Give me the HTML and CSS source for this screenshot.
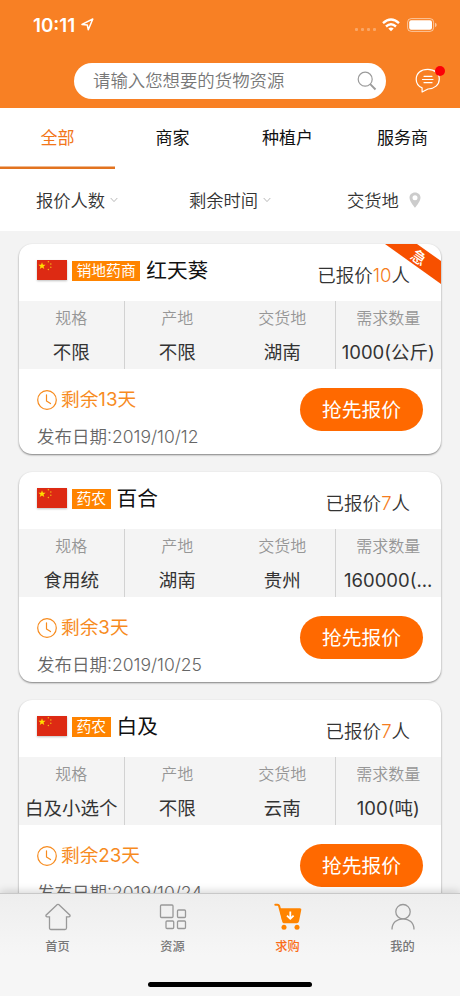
FILE: index.html
```
<!DOCTYPE html>
<html lang="zh-CN">
<head>
<meta charset="utf-8">
<meta name="viewport" content="width=device-width, initial-scale=1">
<title>求购</title>
<link rel="stylesheet" href="styles.css">
</head>
<body>
<svg class="defs" width="0" height="0" aria-hidden="true">
  <symbol id="flag" viewBox="0 0 30 20">
    <path fill="#dd2a13" d="M0 0h30v20H0z"/>
    <path fill="#ffde00" d="M5 2.300l.9 2.500h2.700L6.500 6.500l.8 2.600L5 7.600 2.700 9.100l.8-2.600L1.400 4.800h2.700z"/>
    <g fill="#f4b513"><circle cx="11.400" cy="1.800" r=".75"/><circle cx="13.800" cy="3.900" r=".75"/><circle cx="13.800" cy="7.200" r=".75"/><circle cx="11.400" cy="9.400" r=".75"/></g>
  </symbol>
  <symbol id="clock" viewBox="0 0 20 20">
    <g fill="none" stroke="#f78b1e" stroke-width="1.200" stroke-linecap="round" stroke-linejoin="round"><circle cx="10" cy="10" r="9.300"/><path d="M9.500 4.800v6.200l4 2.600"/></g>
  </symbol>
  <symbol id="chevron" viewBox="0 0 8 6">
    <path d="M.7 1L4 4.600 7.300 1" fill="none" stroke="#b8b8b8" stroke-width="1"/>
  </symbol>
</svg>
<div class="app">
  <header class="header">
    <div class="status">
      <span class="time">10:11</span>
      <svg class="locate" viewBox="0 0 13 13"><path d="M1 6.400L11.800 1 7.300 11.800 6.300 7z" fill="none" stroke="#fff" stroke-width="1.500" stroke-linejoin="round"/></svg>
      <span class="signal"><i></i><i></i><i></i><i></i></span>
      <svg class="wifi" viewBox="0 0 18 14"><g fill="none" stroke="#fff" stroke-width="2.400"><path d="M1 5.200Q9-2.200 17 5.200"/><path d="M4 8.500Q9 3.900 14 8.500"/></g><path d="M9 13.300L6.300 10.500Q9 8.500 11.700 10.500z" fill="#fff"/></svg>
      <svg class="battery" viewBox="0 0 30 14"><rect x=".6" y=".6" width="26" height="12.800" rx="3.600" fill="none" stroke="#fff" stroke-opacity=".55"/><rect x="2.200" y="2.200" width="22.800" height="9.600" rx="2" fill="#fff"/><path d="M28 4.800q1.700.6 1.700 2.200T28 9.200z" fill="#fff" fill-opacity=".55"/></svg>
    </div>
    <div class="searchbar">
      <div class="search">
        <span>请输入您想要的货物资源</span>
        <svg class="lens" viewBox="0 0 20 20"><g fill="none" stroke="#9b9b9b"><circle cx="8.200" cy="8.200" r="7" stroke-width="1.200"/><path d="M13.200 13.200l5.300 5.300" stroke-width="1.900"/></g></svg>
      </div>
      <div class="message">
        <svg viewBox="0 0 26 25"><g fill="none" stroke="#fff" stroke-width="1.200" stroke-linecap="round" stroke-linejoin="round"><path d="M7.100 24V19.900Q1.200 17.400 1.200 11.300C1.200 5 6 1.300 12.800 1.300S24.300 5.300 24.300 11.100 19.500 20.700 13 21z"/><path d="M9 8.300h8M7.500 11.500h10.500M9 14.700h8"/></g></svg>
        <b class="dot"></b>
      </div>
    </div>
  </header>
  <nav class="tabs">
    <a class="tab active">全部</a><a class="tab">商家</a><a class="tab">种植户</a><a class="tab">服务商</a>
  </nav>
  <div class="filters">
    <span class="filter">报价人数<svg class="chev"><use href="#chevron"/></svg></span>
    <span class="filter">剩余时间<svg class="chev"><use href="#chevron"/></svg></span>
    <span class="filter place">交货地<svg class="pin" viewBox="0 0 12 16"><path fill="#ccc" fill-rule="evenodd" d="M6 .4C2.700.4.500 2.800.500 5.800.500 9.600 6 15.800 6 15.800S11.500 9.600 11.500 5.800C11.500 2.800 9.300.4 6 .4zM6 3.300a2.500 2.500 0 1 1 0 5 2.500 2.500 0 0 1 0-5z"/></svg></span>
  </div>
  <main class="list">
    <article class="card">
      <div class="top"><svg class="flag"><use href="#flag"/></svg><span class="tag">销地药商</span><h2>红天葵</h2><span class="quotes">已报价<em>10</em>人</span></div>
      <div class="urgent"><span>急</span></div>
      <dl class="specs">
        <div><dt>规格</dt><dd>不限</dd></div><div><dt>产地</dt><dd>不限</dd></div><div><dt>交货地</dt><dd>湖南</dd></div><div><dt>需求数量</dt><dd>1000(公斤)</dd></div>
      </dl>
      <div class="bottom"><div><p class="left"><svg class="clock"><use href="#clock"/></svg>剩余13天</p><p class="date">发布日期:2019/10/12</p></div><button>抢先报价</button></div>
    </article>
    <article class="card">
      <div class="top"><svg class="flag"><use href="#flag"/></svg><span class="tag">药农</span><h2>百合</h2><span class="quotes">已报价<em>7</em>人</span></div>
      <dl class="specs">
        <div><dt>规格</dt><dd>食用统</dd></div><div><dt>产地</dt><dd>湖南</dd></div><div><dt>交货地</dt><dd>贵州</dd></div><div><dt>需求数量</dt><dd>160000(...</dd></div>
      </dl>
      <div class="bottom"><div><p class="left"><svg class="clock"><use href="#clock"/></svg>剩余3天</p><p class="date">发布日期:2019/10/25</p></div><button>抢先报价</button></div>
    </article>
    <article class="card">
      <div class="top"><svg class="flag"><use href="#flag"/></svg><span class="tag">药农</span><h2>白及</h2><span class="quotes">已报价<em>7</em>人</span></div>
      <dl class="specs">
        <div><dt>规格</dt><dd>白及小选个</dd></div><div><dt>产地</dt><dd>不限</dd></div><div><dt>交货地</dt><dd>云南</dd></div><div><dt>需求数量</dt><dd>100(吨)</dd></div>
      </dl>
      <div class="bottom"><div><p class="left"><svg class="clock"><use href="#clock"/></svg>剩余23天</p><p class="date">发布日期:2019/10/24</p></div><button>抢先报价</button></div>
    </article>
  </main>
  <footer class="tabbar">
    <div class="items">
      <a class="item"><svg viewBox="0 0 28 28"><path d="M13.300 1.600q.7-.6 1.400 0L26 12.200q.4 1.600-1.200 1.600h-2.300v11.200q0 1.500-1.500 1.500H7q-1.500 0-1.500-1.500V13.800H3.200q-1.600 0-1.200-1.600z"/></svg>首页</a>
      <a class="item"><svg viewBox="0 0 28 28"><rect x="1.500" y="2" width="12.500" height="12.500" rx="1"/><rect x="18.500" y="7" width="8" height="7.500" rx="1"/><rect x="7" y="18" width="7.700" height="7.500" rx="1"/><rect x="18.500" y="18" width="8" height="7.500" rx="1"/></svg>资源</a>
      <a class="item active"><svg viewBox="0 0 28 28"><path class="rail" d="M1.300 1.700h2.200q1.200 0 1.600 1.200L9 17.500"/><path class="solid" d="M5.500 5.200h20.300q1.900 0 1.500 1.600l-2.300 11.400q-.5 2-2.300 2H10q-1.300 0-1.700-1.500z"/><circle class="solid" cx="10" cy="24.300" r="2.500"/><circle class="solid" cx="23" cy="24.300" r="2.500"/><path class="arrow" d="M16.300 8.500v7M13 12.600l3.300 3.200 3.300-3.200"/></svg>求购</a>
      <a class="item"><svg viewBox="0 0 28 28"><circle cx="14" cy="8.700" r="7.200"/><path d="M3 26.500C3 19.500 8 15.900 14 15.900s11 3.600 11 10.600"/></svg>我的</a>
    </div>
    <div class="home-indicator"></div>
  </footer>
</div>
</body>
</html>
```
FILE: styles.css
```
* { box-sizing: border-box; margin: 0; padding: 0; }
body {
  width: 460px;
  height: 996px;
  overflow: hidden;
  font-family: Inter, "Noto Sans CJK SC", sans-serif;
  font-weight: 350;
  color: #333;
  background: #f3f3f3;
}
.defs { position: absolute; }
svg { display: block; flex: none; }
.app { height: 996px; display: flex; flex-direction: column; }

.header { height: 108px; flex: none; background: #f88024; }
.status { height: 63px; padding: 15px 23px 0 33px; display: flex; align-items: flex-start; color: #fff; }
.time { font-size: 18.800px; line-height: 21px; font-weight: 600; width: 45px; white-space: nowrap; }
.locate { width: 13px; height: 13px; margin: 3px 0 0 3px; }
.signal { margin: 13px 6px 0 auto; display: flex; gap: 3px; }
.signal i { width: 3px; height: 3px; border-radius: 1px; background: rgba(255, 255, 255, .3); }
.wifi { width: 18px; height: 14px; margin: 3px 7px 0 0; }
.battery { width: 30px; height: 14px; margin-top: 3px; }
.searchbar { display: flex; padding-left: 74px; }
.search {
  width: 312px; height: 36px; padding: 0 9px 0 19px;
  display: flex; align-items: center; justify-content: space-between;
  border-radius: 18px; background: #fff;
  color: #777; font-size: 17.400px; line-height: 38px;
}
.lens { width: 20px; height: 20px; }
.message { position: relative; margin: 5px 0 0 29px; }
.message svg { width: 26px; height: 25px; }
.dot { position: absolute; left: 20px; top: -2px; width: 10px; height: 10px; border-radius: 50%; background: #fb0007; }

.tabs { height: 61px; flex: none; display: flex; background: #fff; font-weight: 400; }
.tab { flex: 1; text-align: center; font-size: 17px; line-height: 61px; color: #111; }
.tab.active { color: #f27619; box-shadow: inset 0 -2.500px #e27320; }
.filters {
  height: 62px; flex: none; padding: 0 36px;
  display: flex;
  background: #fff; font-size: 17.300px; line-height: 63px;
}
.filter { display: flex; align-items: center; flex: 0 0 153px; }
.filter.place { flex: 1; padding-left: 5px; }
.chev { width: 8px; height: 6px; margin-left: 5px; }
.pin { width: 12px; height: 16px; margin-left: 10px; }

.list { flex: 1; min-height: 0; overflow: hidden; padding: 13px 19px 0; display: flex; flex-direction: column; gap: 18px; }
.card { position: relative; height: 210px; flex: none; border-radius: 13px; background: #fff; box-shadow: 0 1px 2px rgba(0, 0, 0, .48); }
.top { height: 57px; padding: 0 31px 0 18px; display: flex; align-items: center; }
.flag { width: 30px; height: 20px; margin-top: -5px; box-shadow: 0 1px 2px rgba(0, 0, 0, .25); }
.tag { margin: -4px 0 0 5px; padding: 0 4.500px; height: 20px; background: #ff8400; color: #fff; font-size: 14.800px; line-height: 21px; font-weight: 400; }
h2 { margin: -3px 0 0 6px; font-size: 20.700px; line-height: 30px; font-weight: 400; color: #111; }
.quotes { margin: 4px 0 0 auto; font-size: 18.500px; line-height: 28px; }
.quotes em { font-style: normal; color: #f57c20; }
.urgent {
  position: absolute; right: 0; top: 0; width: 56px; height: 40px;
  background: #f75000; clip-path: polygon(0 0, 32px 0, 56px 17px, 56px 40px);
  color: #fff;
}
.urgent span { position: absolute; left: 26px; top: 4px; font-size: 15px; line-height: 20px; font-weight: 500; transform: rotate(35deg); }
.specs { height: 68px; display: grid; grid-template-columns: repeat(4, 1fr); background: #f4f4f4; text-align: center; }
.specs div:nth-child(odd) { border-right: 1px solid #d2d2d2; }
.specs div { white-space: nowrap; min-width: 0; }
.specs dt { padding-top: 4px; font-size: 16px; line-height: 27px; color: #969696; }
.specs dd { padding-top: 5px; font-size: 18.500px; line-height: 31px; font-weight: 400; }
.bottom { height: 85px; padding: 17px 18px 0; display: flex; justify-content: space-between; }
.left { display: flex; align-items: center; gap: 4px; font-size: 18.700px; line-height: 28px; color: #f78b1e; font-weight: 400; }
.clock { width: 20px; height: 20px; }
.date { margin-top: 9px; font-size: 17.500px; line-height: 28px; color: #666; }
button {
  width: 123px; height: 43px; margin-top: 2px; border: 0; border-radius: 22px;
  background: #ff6900; color: #fff; font: inherit; font-weight: 400; font-size: 19.800px; line-height: 44px;
}

.tabbar { position: relative; height: 102px; flex: none; background: linear-gradient(#eee, #f6f6f6 60%); box-shadow: 0 -1px #c8c8c8, 0 -3px 8px rgba(0, 0, 0, .16); }
.items { display: flex; height: 90px; padding-top: 9px; }
.item { flex: 1; display: flex; flex-direction: column; align-items: center; gap: 6px; font-size: 12.200px; line-height: 19px; color: #777; font-weight: 500; }
.item svg { width: 28px; height: 28px; fill: none; stroke: #999; stroke-width: 1.300; }
.item.active { color: #fa6c16; }
.item .solid { fill: #ff8400; stroke: none; }
.item .rail { stroke: #ff8400; stroke-width: 2; stroke-linecap: round; }
.item .arrow { stroke: #fff; stroke-width: 1.800; }
.home-indicator { width: 164px; height: 5px; border-radius: 3px; background: #000; margin: -2px auto 0; }
```
